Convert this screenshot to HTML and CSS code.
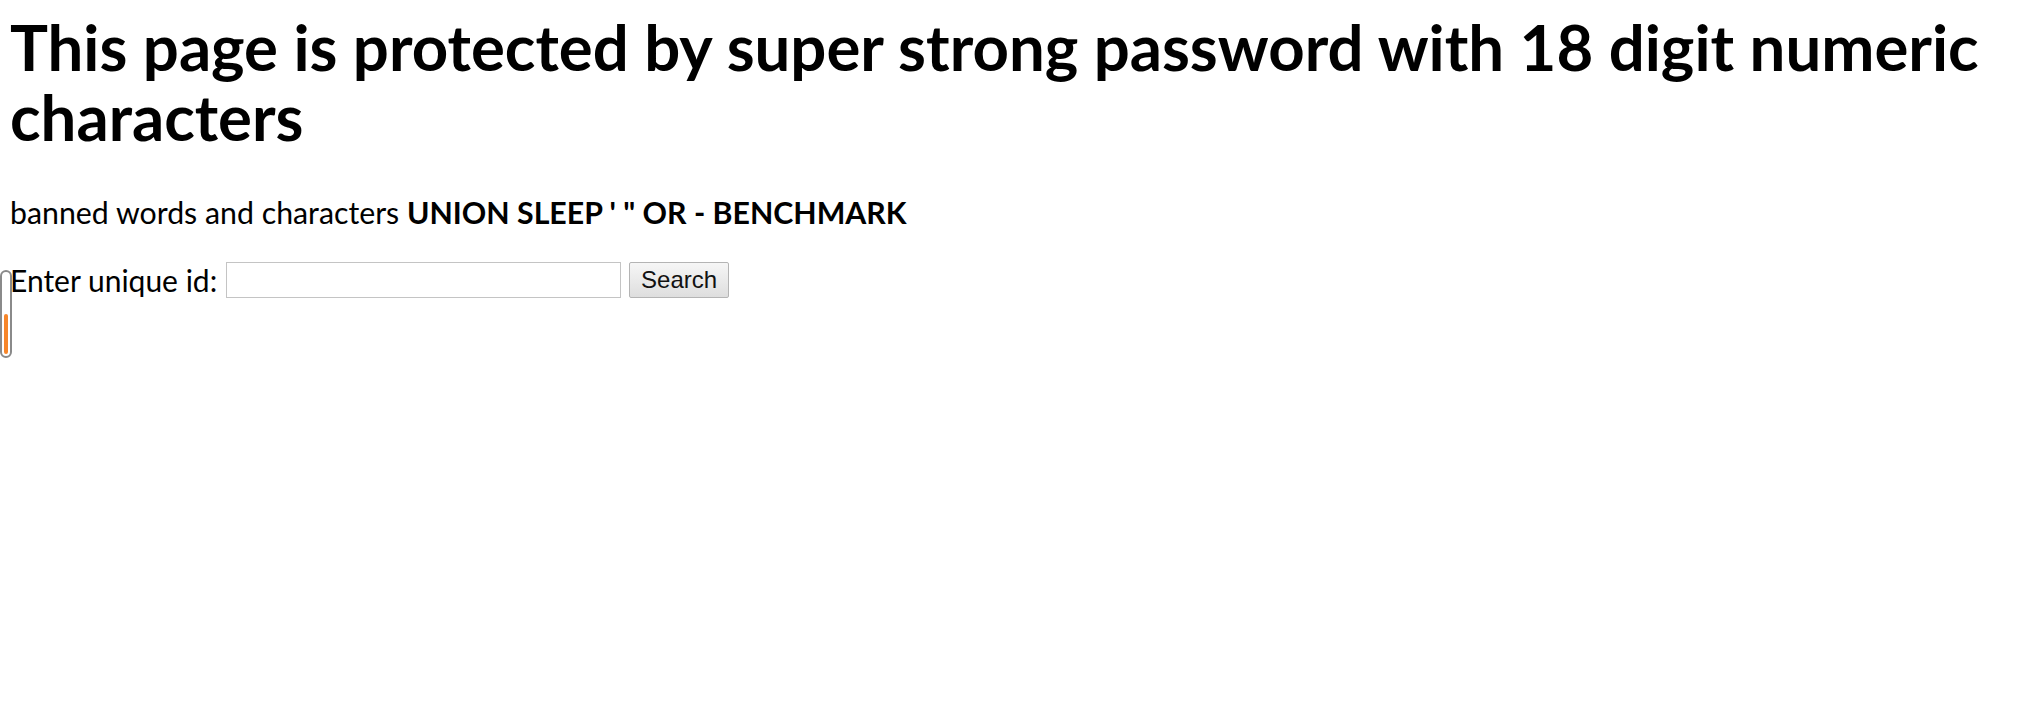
FILE: index.html
```html
<!DOCTYPE html>
<html>
<head>
<meta charset="utf-8">
<title>Protected</title>
<link rel="stylesheet" href="styles.css">
</head>
<body>
<main class="page">
  <h1 class="title">This page is protected by super strong password with 18 digit numeric characters</h1>
  <p class="banned">banned words and characters <b>UNION SLEEP ' " OR - BENCHMARK</b></p>
  <form class="search" onsubmit="return false">
    <label class="label" for="uid">Enter unique id:</label>
    <input class="field" id="uid" type="text">
    <button class="btn" type="submit">Search</button>
  </form>
</main>
<div class="meter"><div class="meter-fill"></div></div>
</body>
</html>
```

FILE: styles.css
```css
html, body {
  margin: 0;
  padding: 0;
  background: #ffffff;
}
.page {
  padding: 12px 0 0 10px;
  font-family: Lato, "Open Sans", sans-serif;
  color: #000;
}
.title {
  margin: 0;
  font-size: 63.5px;
  line-height: 70px;
  font-weight: 700;
}
.banned {
  margin: 42px 0 0 0;
  font-size: 30.3px;
  line-height: 36px;
}
.banned b {
  font-weight: 700;
}
.search {
  margin-top: 32px;
  display: flex;
  align-items: center;
  font-size: 30px;
}
.label {
  margin-right: 9px;
}
.field {
  width: 395px;
  height: 36px;
  box-sizing: border-box;
  border: 1px solid #c4c4c4;
  padding: 0 4px;
  margin: 0 8px 0 0;
  font-size: 20px;
}
.btn {
  width: 100px;
  height: 36px;
  box-sizing: border-box;
  border: 1px solid #b4b4b4;
  border-radius: 2px;
  background: linear-gradient(#f6f6f6, #dedede);
  font-family: "Liberation Sans", Arial, sans-serif;
  font-size: 24px;
  color: #111;
  padding: 0;
}
.meter {
  position: absolute;
  left: 0;
  top: 270px;
  width: 12px;
  height: 88px;
  box-sizing: border-box;
  border: 2px solid #8a8a8a;
  border-radius: 6px;
  background: #fff;
}
.meter-fill {
  position: absolute;
  left: 2px;
  right: 2px;
  bottom: 2px;
  height: 40px;
  background: #f7862a;
  border-radius: 2px;
}
```
